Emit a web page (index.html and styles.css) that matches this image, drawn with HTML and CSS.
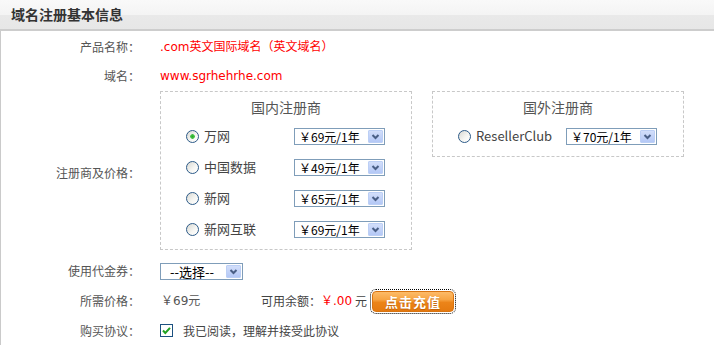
FILE: index.html
```html
<!DOCTYPE html>
<html lang="zh-CN">
<head>
  <meta charset="UTF-8">
  <meta name="viewport" content="width=device-width, initial-scale=1.0">
  <title>域名注册基本信息</title>
  <link rel="stylesheet" href="styles.css">
</head>
<body>

  <h2 class="panel-title">域名注册基本信息</h2>

  <form class="reg-form">
    <div class="row">
      <span class="label">产品名称：</span>
      <span class="red latin">.com英文国际域名（英文域名）</span>
    </div>
    <div class="row row-domain">
      <span class="label">域名：</span>
      <span class="red latin">www.sgrhehrhe.com</span>
    </div>

    <div class="row row-registrar">
      <span class="label">注册商及价格：</span>
      <div class="boxes">
        <div class="reg-box">
          <div class="box-title">国内注册商</div>
          <div class="reg-list">
            <div class="reg-item">
              <label class="reg-name"><input type="radio" name="registrar" checked>万网</label>
              <span class="sel"><select><option>￥69元/1年</option></select><span class="sel-arrow"><svg width="13" height="11" viewBox="0 0 13 11"><path d="M3.5 4 L6.5 7 L9.5 4" fill="none" stroke="#4a5f86" stroke-width="2"/></svg></span></span>
            </div>
            <div class="reg-item">
              <label class="reg-name"><input type="radio" name="registrar">中国数据</label>
              <span class="sel"><select><option>￥49元/1年</option></select><span class="sel-arrow"><svg width="13" height="11" viewBox="0 0 13 11"><path d="M3.5 4 L6.5 7 L9.5 4" fill="none" stroke="#4a5f86" stroke-width="2"/></svg></span></span>
            </div>
            <div class="reg-item">
              <label class="reg-name"><input type="radio" name="registrar">新网</label>
              <span class="sel"><select><option>￥65元/1年</option></select><span class="sel-arrow"><svg width="13" height="11" viewBox="0 0 13 11"><path d="M3.5 4 L6.5 7 L9.5 4" fill="none" stroke="#4a5f86" stroke-width="2"/></svg></span></span>
            </div>
            <div class="reg-item">
              <label class="reg-name"><input type="radio" name="registrar">新网互联</label>
              <span class="sel"><select><option>￥69元/1年</option></select><span class="sel-arrow"><svg width="13" height="11" viewBox="0 0 13 11"><path d="M3.5 4 L6.5 7 L9.5 4" fill="none" stroke="#4a5f86" stroke-width="2"/></svg></span></span>
            </div>
          </div>
        </div>

        <div class="reg-box">
          <div class="box-title">国外注册商</div>
          <div class="reg-list">
            <div class="reg-item">
              <label class="reg-name"><input type="radio" name="registrar">ResellerClub</label>
              <span class="sel"><select><option>￥70元/1年</option></select><span class="sel-arrow"><svg width="13" height="11" viewBox="0 0 13 11"><path d="M3.5 4 L6.5 7 L9.5 4" fill="none" stroke="#4a5f86" stroke-width="2"/></svg></span></span>
            </div>
          </div>
        </div>
      </div>
    </div>

    <div class="row row-voucher">
      <span class="label">使用代金券：</span>
      <span class="sel sel-voucher"><select><option>--选择--</option></select><span class="sel-arrow"><svg width="13" height="11" viewBox="0 0 13 11"><path d="M3.5 4 L6.5 7 L9.5 4" fill="none" stroke="#4a5f86" stroke-width="2"/></svg></span></span>
    </div>

    <div class="row">
      <span class="label">所需价格：</span>
      <span class="price latin">￥69元</span>
      <span class="balance-label">可用余额：</span>
      <span class="red latin">￥.00</span>
      <span class="unit">元</span>
      <button type="button" class="btn-charge">点击充值</button>
    </div>

    <div class="row">
      <span class="label">购买协议：</span>
      <label class="agree">
        <span class="check"><svg width="11" height="11" viewBox="0 0 11 11"><path d="M2 5.5 L4.3 8 L9 2.8" fill="none" stroke="#21a121" stroke-width="2"/></svg></span>
        我已阅读，理解并接受此协议
      </label>
    </div>
  </form>

</body>
</html>
```

FILE: styles.css
```css
body {
    margin: 0;
    font-family: "Noto Sans CJK SC", sans-serif;
    font-size: 12px;
    line-height: 1.4;
    color: #333;
    background: #fff;
}

.panel-title {
    margin: 0;
    height: 29px;
    line-height: 29px;
    padding-left: 11px;
    font-size: 14px;
    font-weight: bold;
    color: #333;
    background: linear-gradient(#f9f9f9 0, #f4f4f4 50%, #e9e9e9 52%, #e7e7e7 100%);
    border-bottom: 2px solid #cdcdcd;
}

.reg-form {
    border-left: 1px solid #cacaca;
    padding-top: 1px;
    min-height: 313px;
}

.row {
    display: flex;
    align-items: center;
    min-height: 30px;
}
.row-domain {
    min-height: 29px;
}
.label {
    flex-shrink: 0;
    width: 139px;
    margin-right: 20px;
    text-align: right;
    color: #555;
}
.red {
    color: #f00;
}
.latin {
    font-family: "DejaVu Sans", "Noto Sans CJK SC", sans-serif;
}

/* registrar boxes */
.row-registrar .label {
    padding-top: 5px;
}
.boxes {
    display: flex;
    align-items: flex-start;
    gap: 20px;
}
.reg-box {
    width: 250px;
    border: 1px dashed #c8c8c8;
    padding: 5px 0 4px;
}
.box-title {
    text-align: center;
    font-size: 14px;
    line-height: 20px;
    color: #555;
}
.reg-list {
    margin-top: 4px;
}
.reg-item {
    display: flex;
    align-items: center;
    height: 31px;
    padding-left: 25px;
}
.reg-name {
    display: flex;
    align-items: center;
    width: 108px;
    font-size: 13px;
    color: #444;
}

input[type="radio"] {
    appearance: none;
    -webkit-appearance: none;
    width: 13px;
    height: 13px;
    margin: 0 5px 0 0;
    border: 1px solid #2c5a88;
    border-radius: 50%;
    background: linear-gradient(135deg, #d8d8d2, #f7f7f4 60%, #fff);
    flex-shrink: 0;
}
input[type="radio"]:checked {
    background: radial-gradient(circle, #2aa82a 0, #49c449 2px, transparent 2.6px),
                linear-gradient(135deg, #d8d8d2, #f7f7f4 60%, #fff);
}

/* select boxes */
.sel {
    position: relative;
    display: inline-block;
    width: 91px;
    height: 17px;
}
.sel select {
    appearance: none;
    -webkit-appearance: none;
    box-sizing: border-box;
    width: 100%;
    height: 100%;
    margin: 0;
    padding: 0 0 0 4px;
    border: 1px solid #7f9db9;
    border-radius: 0;
    background: #fff;
    font-family: "Noto Sans CJK SC", sans-serif;
    font-size: 12px;
    line-height: 15px;
    color: #000;
}
.sel-arrow {
    position: absolute;
    top: 2px;
    right: 2px;
    bottom: 2px;
    width: 13px;
    border: 1px solid #bccff5;
    border-radius: 1px;
    background: linear-gradient(#d2defa, #b4c8f6);
    display: flex;
    align-items: center;
    justify-content: center;
    pointer-events: none;
}
.sel-voucher {
    width: 83px;
}
.sel-voucher select {
    padding-left: 9px;
    font-size: 13px;
}

.row-voucher {
    margin-top: 6px;
}

/* price row */
.price {
    width: 100px;
    color: #555;
    padding-left: 1px;
}
.balance-label {
    color: #444;
}
.unit {
    margin-left: 3px;
    color: #444;
}
.btn-charge {
    width: 82px;
    height: 21px;
    margin-left: 5px;
    padding: 0;
    border: 1px solid #d97410;
    border-radius: 4px;
    background: linear-gradient(#fdbb68 0, #f7a443 40%, #ec8419 55%, #e57a10 100%);
    color: #fff;
    font-family: "Noto Sans CJK SC", sans-serif;
    font-size: 13px;
    font-weight: bold;
    line-height: 19px;
    letter-spacing: 1px;
    text-shadow: 0 1px 1px rgba(150, 70, 0, 0.5);
    outline: 1px dotted #000;
    outline-offset: 1px;
}

/* agreement */
.agree {
    display: flex;
    align-items: center;
    color: #444;
}
.check {
    display: inline-flex;
    align-items: center;
    justify-content: center;
    width: 11px;
    height: 11px;
    margin-right: 10px;
    border: 1px solid #1c5180;
    background: #fff;
}
```
